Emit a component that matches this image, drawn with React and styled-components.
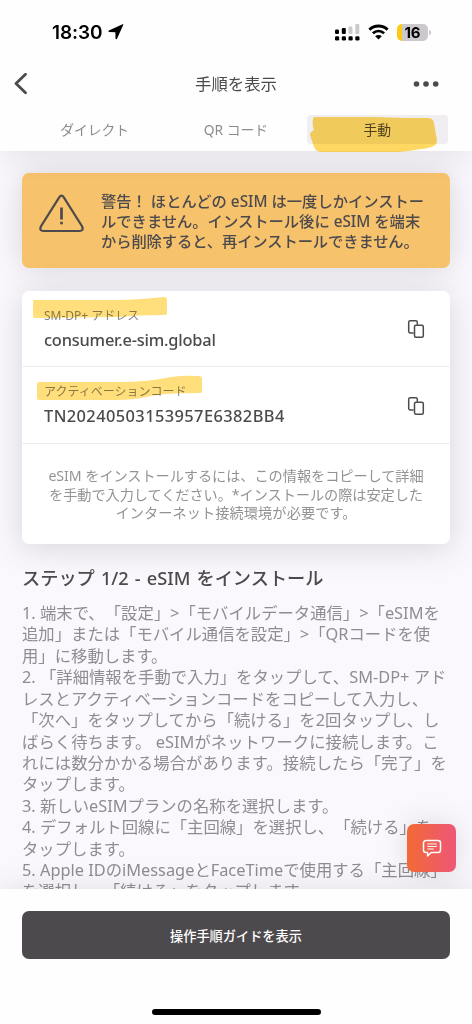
import React from 'react'
import styled, { createGlobalStyle } from 'styled-components'


const GlobalStyle = createGlobalStyle`
  * {
    box-sizing: border-box;
  }

  body {
    margin: 0;
    background: #fff;
    font-family: "Noto Sans", "Noto Sans CJK JP", sans-serif;
    color: #4d4a4d;
    text-spacing-trim: space-all;
  }

  p, h1, h2 {
    margin: 0;
  }

  button {
    border: 0;
    padding: 0;
    background: none;
    font-family: inherit;
    color: inherit;
  }

  svg {
    display: block;
  }
`

const Screen = styled.div`
  position: relative;
  width: 472px;
  height: 1024px;
  display: flex;
  flex-direction: column;
  overflow: hidden;
  background: #fefefe;
`

const Header = styled.header`
  position: relative;
  z-index: 1;
  height: 151px;
  flex: none;
  background: #fefefe;
  box-shadow: 0 0 30px rgba(77, 74, 77, .14);
`

const StatusBar = styled.div`
  height: 64px;
  padding: 0 42px 0 52px;
  display: flex;
  align-items: center;
  color: #000;
`

const Clock = styled.span`
  font-family: Inter, sans-serif;
  font-size: 19px;
  font-weight: 600;
  letter-spacing: -.1px;
  margin-right: 6px;
`

const StatusIcons = styled.div`
  margin-left: auto;
  display: flex;
  align-items: center;
  gap: 8px;
`

const Battery = styled.div`
  position: relative;
  width: 31px;
  height: 17px;
  border-radius: 5px;
  background: linear-gradient(90deg, #fbc916 5px, #cbc9cd 5px);
  font: 700 15px/17px Inter, sans-serif;
  text-align: center;
  margin-right: 2px;

  &::after {
    content: '';
    position: absolute;
    right: -3px;
    top: 6px;
    width: 2px;
    height: 5px;
    border-radius: 0 2px 2px 0;
    background: #cbc9cd;
  }
`

const NavBar = styled.div`
  height: 39px;
  padding: 0 33px 0 14px;
  display: flex;
  align-items: center;
  justify-content: space-between;
`

const Title = styled.h1`
  font-size: 16.4px;
  font-weight: 400;
  line-height: 24px;
  padding-left: 31px;
`

const Tabs = styled.div`
  height: 48px;
  padding: 12px 24px 0;
  display: flex;
`

const Tab = styled.button`
  position: relative;
  width: 141.3px;
  height: 29px;
  border-radius: 4px;
  font-size: 13.8px;
  line-height: 28px;
  color: ${({ $active }) => ($active ? '#4d4a4d' : '#8e8c90')};
  background: ${({ $active }) => ($active ? '#f0eef1' : 'transparent')};
`

// marker stroke laid over a label
const Marker = styled.svg`
  position: absolute;
  left: ${({ $x }) => $x}px;
  top: ${({ $y }) => $y}px;
  mix-blend-mode: multiply;
  fill: ${({ $color }) => $color || '#ffdf7c'};
`

const Content = styled.main`
  flex: 1;
  min-height: 0;
  overflow: hidden;
  padding: 22px 22px 0;
  background: #faf8fc;
`

const Alert = styled.div`
  height: 95px;
  padding: 18px 18px 0;
  display: flex;
  border-radius: 7px;
  background: #f6c26c;
  box-shadow: 0 0 32px rgba(77, 74, 77, .2);

  svg {
    flex: none;
    margin: 3px 16px 0 -1px;
  }
`

const Line = styled.span`
  display: block;
  white-space: nowrap;
  letter-spacing: ${({ $track }) => $track || 0}px;
`

const AlertText = styled.p`
  font-size: 15.3px;
  font-weight: 500;
  line-height: 20px;
`

const Card = styled.section`
  position: relative;
  margin-top: 23px;
  height: 253px;
  border-radius: 7px;
  background: #fff;
  box-shadow: 0 4px 32px rgba(77, 74, 77, .2);
`

const Field = styled.div`
  position: relative;
  height: ${({ $height }) => $height}px;
  padding: 1px 25px 0 22px;
  display: flex;
  align-items: center;
  justify-content: space-between;
  border-bottom: 1px solid #eeecef;
`

const Label = styled.p`
  font-size: 12px;
  line-height: 18px;
  color: #8a888c;
`

const Value = styled.p`
  font-size: 16.4px;
  font-weight: 500;
  line-height: 24px;
  margin-top: 3px;
  letter-spacing: ${({ $track }) => $track}px;
`

const Info = styled.p`
  padding-top: 23px;
  font-size: 14.2px;
  line-height: 18.6px;
  text-align: center;
  color: #949295;
`

const StepTitle = styled.h2`
  margin-top: 21px;
  font-size: 18.2px;
  font-weight: 500;
  line-height: 26px;
  word-spacing: 1.4px;
`

const Steps = styled.div`
  margin-top: 12px;
  font-size: 16.35px;
  line-height: 21.42px;
  color: #8f8d91;
`

const ChatButton = styled.button`
  position: absolute;
  z-index: 4;
  right: 16px;
  bottom: 152px;
  width: 49px;
  height: 48px;
  border-radius: 7px;
  display: flex;
  align-items: center;
  justify-content: center;
  background: linear-gradient(90deg, #f26a35, #ee5677);
`

// soft shade behind the chat button, kept under the footer
const ChatShade = styled.div`
  position: absolute;
  z-index: 2;
  right: 16px;
  bottom: 152px;
  width: 49px;
  height: 48px;
  border-radius: 7px;
  box-shadow: 0 0 28px rgba(77, 74, 77, .16);
`

const Footer = styled.footer`
  position: relative;
  z-index: 3;
  flex: none;
  height: 135px;
  padding: 22px 22px 0;
  display: flex;
  flex-direction: column;
  align-items: center;
  background: #fefefe;
  box-shadow: 0 0 28px rgba(77, 74, 77, .14);
`

const GuideButton = styled.button`
  width: 100%;
  height: 48px;
  border-radius: 7px;
  background: #4d4a4d;
  color: #fff;
  font-size: 13.2px;
  font-weight: 500;
`

const HomeIndicator = styled.div`
  margin-top: 50px;
  width: 169px;
  height: 6px;
  border-radius: 3px;
  background: #000;
`

const alertLines = [
  ['警告！ ほとんどの eSIM は一度しかインストー', 0],
  ['ルできません。インストール後に eSIM を端末', 0],
  ['から削除すると、再インストールできません。', -.1],
]

const infoLines = [
  ['eSIM をインストールするには、この情報をコピーして詳細', -.06],
  ['を手動で入力してください。*インストールの際は安定した', -.06],
  ['インターネット接続環境が必要です。', .08],
]

const stepLines = [
  ['1. 端末で、「設定」>「モバイルデータ通信」>「eSIMを', 0],
  ['追加」または「モバイル通信を設定」>「QRコードを使', 0],
  ['用」に移動します。', 0],
  ['2. 「詳細情報を手動で入力」をタップして、SM-DP+ アド', 0],
  ['レスとアクティベーションコードをコピーして入力し、', 0],
  ['「次へ」をタップしてから「続ける」を2回タップし、し', 0],
  ['ばらく待ちます。 eSIMがネットワークに接続します。こ', .04],
  ['れには数分かかる場合があります。接続したら「完了」を', .06],
  ['タップします。', 0],
  ['3. 新しいeSIMプランの名称を選択します。', 0],
  ['4. デフォルト回線に「主回線」を選択し、「続ける」を', 0],
  ['タップします。', 0],
  ['5. Apple IDのiMessageとFaceTimeで使用する「主回線」', 0],
  ['を選択し、「続ける」をタップします。', 0],
]

const renderLines = (lines) =>
  lines.map(([text, track], i) => <Line key={i} $track={track}>{text}</Line>)

const CopyIcon = () => (
  <svg width="18" height="20" viewBox="0 0 18 20" fill="none" stroke="#4d4a4d" strokeWidth="1.5">
    <path d="M6.6 14H3.2a1.5 1.5 0 0 1-1.5-1.5V3.2a1.5 1.5 0 0 1 1.5-1.5h5.600a1.5 1.5 0 0 1 1.5 1.5v2.600" />
    <rect x="7.5" y="6.2" width="8.8" height="12" rx="1.5" />
  </svg>
)


export default function App() {
  return (
    <>
      <GlobalStyle />
      <Screen>
        <Header>
          <StatusBar>
            <Clock>18:30</Clock>
            <svg width="16" height="16" viewBox="0 0 16 16">
              <path d="M15.2.9c.4-.4 0-.9-.6-.7L.9 6.6c-.8.4-.6 1.5.3 1.5l6.2.1.1 6.3c0 .9 1.1 1.1 1.5.3z" />
            </svg>
            <StatusIcons>
              <svg width="25" height="17" viewBox="0 0 25 17">
                <rect x="0" y="5.5" width="4" height="4.5" rx="1.2" />
                <rect x="6.8" y="4" width="4" height="6" rx="1.2" />
                <rect x="13.5" y="2.5" width="4" height="7.5" rx="1.2" fill="#cbc9cd" />
                <rect x="20.3" y="0" width="4" height="10" rx="1.2" fill="#cbc9cd" />
                <rect x="0" y="12.3" width="4.2" height="4.2" rx="1.3" />
                <rect x="6.8" y="12.3" width="4.2" height="4.2" rx="1.3" />
                <rect x="13.5" y="12.3" width="4.2" height="4.2" rx="1.3" />
                <rect x="20.3" y="12.3" width="4.2" height="4.2" rx="1.3" />
              </svg>
              <svg width="21" height="16" viewBox="0 0 21 16">
                <path d="M1.4 5.7a13 13 0 0 1 18.2 0" fill="none" stroke="#000" strokeWidth="2.9" />
                <path d="M4.9 9.3a8 8 0 0 1 11.2 0" fill="none" stroke="#000" strokeWidth="2.7" />
                <path d="M10.5 15.6 7.2 12.3a4.7 4.700 0 0 1 6.600 0z" />
              </svg>
              <Battery>16</Battery>
            </StatusIcons>
          </StatusBar>
          <NavBar>
            <svg width="14" height="22" viewBox="0 0 14 22" fill="none" stroke="#4d4a4d" strokeWidth="2.8" strokeLinecap="round" strokeLinejoin="round">
              <path d="M11.5 1.300 2 10.500l9.500 9.200" />
            </svg>
            <Title>手順を表示</Title>
            <svg width="26" height="6" viewBox="0 0 26 6" fill="#4d4a4d">
              <circle cx="3.5" cy="3" r="2.8" />
              <circle cx="13" cy="3" r="2.8" />
              <circle cx="22.7" cy="3" r="2.8" />
            </svg>
          </NavBar>
          <Tabs>
            <Tab>ダイレクト</Tab>
            <Tab>QR コード</Tab>
            <Tab $active>
              手動
              <Marker $x={3} $y={1} $color="#ffd960" width="128" height="37">
                <path d="M3 3q-1-1 2-2l58 0 32 1 23 0q5 0 6 5l2 12q2 9-1 10-4 3-14 4-10 2-22 3H11Q5 36 3 28L0 19q0-3 4-5-2-4-1-11z" />
              </Marker>
            </Tab>
          </Tabs>
        </Header>

        <Content>
          <Alert>
            <svg width="46" height="40" viewBox="0 0 46 40" fill="none" stroke="#4d4a4d" strokeWidth="2.2" strokeLinecap="round">
              <path d="M20.200 3.300Q22.500-.2 24.800 3.300L43 32.200Q45.100 37 40.500 37h-36Q-.1 37 2 32.200z" />
              <path d="M22.500 13.500v12" strokeWidth="2.700" strokeLinecap="butt" />
              <circle cx="22.500" cy="29" r="1.500" fill="#4d4a4d" stroke="none" />
            </svg>
            <AlertText>{renderLines(alertLines)}</AlertText>
          </Alert>

          <Card>
            <Field $height={76}>
              <div>
                <Label>SM-DP+ アドレス</Label>
                <Value $track={-.2}>consumer.e-sim.global</Value>
              </div>
              <CopyIcon />
              <Marker $x={10} $y={5} width="136" height="23">
                <path d="M2 4l82 0q20 0 48-3 3 0 3 3v13q0 2-3 2-28 0-45 2l-84 1q-2 0-2-2V6q0-2 1-2z" />
              </Marker>
            </Field>
            <Field $height={77}>
              <div>
                <Label>アクティベーションコード</Label>
                <Value $track={.42}>TN20240503153957E6382BB4</Value>
              </div>
              <CopyIcon />
              <Marker $x={14} $y={7} width="168" height="27">
                <path d="M3 8h80q30 0 52-5 15-2 28-1 3 0 3 3v12q0 2-3 2-36 0-53 4-12 3-29 3H3q-2 0-2-2V10q0-2 2-2z" />
              </Marker>
            </Field>
            <Info>{renderLines(infoLines)}</Info>
          </Card>

          <StepTitle>ステップ 1/2 - eSIM をインストール</StepTitle>
          <Steps>{renderLines(stepLines)}</Steps>
        </Content>

        <ChatShade />
        <ChatButton>
          <svg width="20" height="19" viewBox="0 0 20 19" fill="none" stroke="#fff" strokeWidth="1.5" strokeLinecap="round" strokeLinejoin="round">
            <path d="M4 1.5h12a2.5 2.5 0 0 1 2.5 2.5v7a2.5 2.5 0 0 1-2.5 2.5H9.200L5.600 17v-3.500H4A2.500 2.500 0 0 1 1.500 11V4A2.500 2.500 0 0 1 4 1.500z" />
            <path d="M5.800 5h8.600M5.800 7.500h8.600M5.800 10h5.600" strokeWidth="1.100" />
          </svg>
        </ChatButton>

        <Footer>
          <GuideButton>操作手順ガイドを表示</GuideButton>
          <HomeIndicator />
        </Footer>
      </Screen>
    </>
  )
}
